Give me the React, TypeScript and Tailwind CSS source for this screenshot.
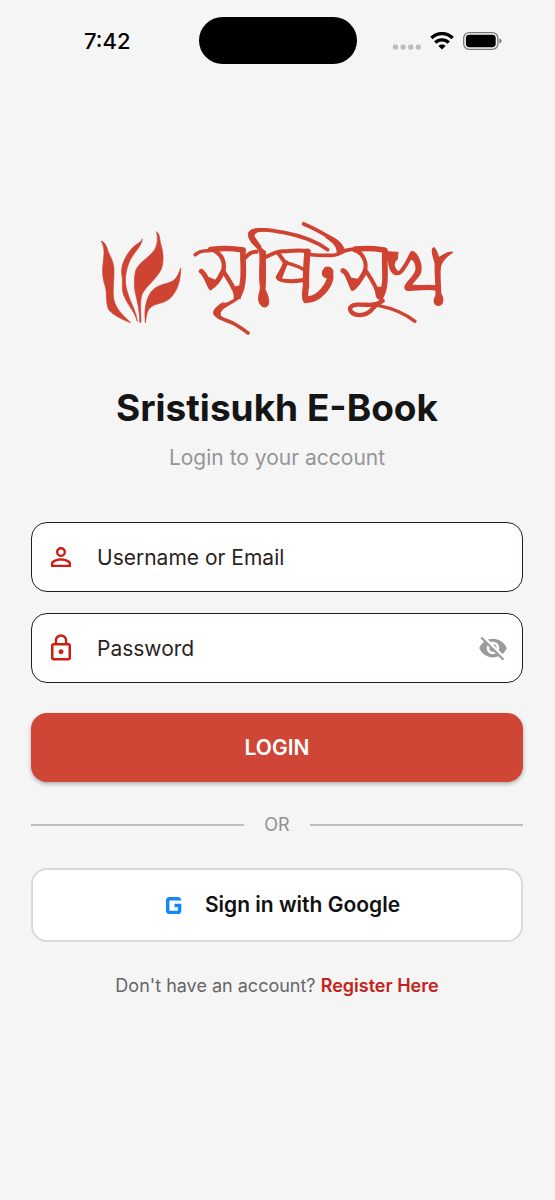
import { useState } from "react";
import { MdGMobiledata, MdLockOutline, MdPersonOutline, MdVisibility, MdVisibilityOff } from "react-icons/md";

function StatusBar() {
  return (
    <header className="flex items-center pt-[17px] pl-0.5">
      <div className="flex flex-1 justify-center pl-[14px] text-[22px] leading-7 font-medium text-black">7:42</div>
      <div className="h-[47px] w-[158px] rounded-full bg-black" />
      <div className="flex flex-1 items-center justify-center gap-[9px] pr-4">
        <svg viewBox="0 0 28 18" className="h-[18px] w-7" fill="#bdbdbd" aria-hidden="true">
          <rect x="0" y="12.5" width="5" height="5" rx="1.6" />
          <rect x="7.6" y="12.5" width="5" height="5" rx="1.6" />
          <rect x="15.2" y="12.5" width="5" height="5" rx="1.6" />
          <rect x="22.8" y="12.5" width="5" height="5" rx="1.6" />
        </svg>
        <svg viewBox="0 0 24 18" className="h-[18px] w-6" fill="none" stroke="#000" strokeWidth="3.4" aria-hidden="true">
          <path d="M1.4 6a15 15 0 0 1 21.2 0" />
          <path d="M5.3 10.6a9.5 9.5 0 0 1 13.4 0" />
          <path d="M12 17.6 8.4 14a5.1 5.1 0 0 1 7.2 0Z" fill="#000" stroke="none" />
        </svg>
        <svg viewBox="0 0 39 18" className="h-[18px] w-[39px]" aria-hidden="true">
          <rect x="0.7" y="0.7" width="34.2" height="16.6" rx="5.4" fill="none" stroke="#777" strokeWidth="1.3" />
          <rect x="2.9" y="2.8" width="29.8" height="12.4" rx="3.4" fill="#000" />
          <path d="M36.4 6.2q2.2 1 2.2 2.8t-2.2 2.8Z" fill="#777" />
        </svg>
      </div>
    </header>
  );
}

function Logo() {
  return (
    <svg
      viewBox="6 0 1110 375"
      className="h-[125px] w-[370px]"
      fill="none"
      stroke="#cf4332"
      strokeLinecap="round"
      strokeLinejoin="round"
      role="img"
      aria-label="Sristisukh"
    >
      <g fill="#cf4332" strokeWidth="2">
        <path d="M34 79C48 82 50 98 56 113C64 131 71 142 72 163C73 194 67 224 71 251C77 282 99 301 122 323C95 313 73 302 57 286C46 262 52 238 46 215C40 197 37 182 38 158C40 130 48 102 34 79Z" />
        <path d="M157 73C153 100 126 115 115 148C104 180 104 205 112 230C121 264 137 283 142 319C132 285 111 269 100 237C93 213 101 201 95 178C92 143 113 113 132 94C144 84 152 83 157 73Z" />
        <path d="M200 51C211 59 208 73 213 90C220 113 222 138 214 162C201 191 168 213 156 238C149 261 153 289 153 322H149C150 291 143 264 138 242C131 217 132 184 138 164C149 141 178 127 194 104C204 86 203 67 200 51Z" />
        <path d="M272 160C273 184 266 219 249 240C227 270 201 260 181 278C169 289 169 307 166 324C164 301 164 275 171 256C179 231 193 217 212 211C234 203 248 202 257 190C264 181 268 171 272 160Z" />
      </g>
      <g>
        <path d="M316 119C332 103 350 110 370 105" strokeWidth="11" />
        <path d="M362 103C390 100 425 99 459 105" strokeWidth="16" />
        <path d="M372 106C396 118 407 144 399 170" strokeWidth="13" />
        <path d="M334 169C346 176 351 197 362 217C377 209 389 190 399 169" strokeWidth="15" />
        <path d="M345 186L362 222L381 200Z" fill="#cf4332" strokeWidth="8" />
        <path d="M399 168C410 185 428 208 439 240" strokeWidth="13" />
        <path d="M459 107C457 137 464 172 457 207C455 226 448 239 440 247" strokeWidth="17" />
        <path d="M432 218L458 212L450 250L434 246Z" fill="#cf4332" strokeWidth="5" />
        <path d="M444 246C428 267 389 272 377 291C375 309 405 313 430 325C448 334 460 344 474 354" strokeWidth="11" />
        <path d="M397 264C373 278 364 293 376 303L402 313C382 298 388 288 418 268Z" fill="#cf4332" strokeWidth="3" />
        <path d="M464 130C474 117 486 109 500 110" strokeWidth="12" />
      </g>
      <g>
        <path d="M520 110C500 94 473 70 481 53C498 38 544 46 584 53C635 63 680 80 713 104" strokeWidth="11" />
        <path d="M476 62C472 42 500 37 530 42L560 50C520 46 493 46 492 64L514 96L500 98C489 88 479 76 476 62Z" fill="#cf4332" strokeWidth="3" />
        <path d="M502 98L527 110C524 144 529 179 525 223C534 242 541 261 532 273C522 282 508 271 506 255C504 240 512 230 511 215C506 177 512 139 509 112Z" fill="#cf4332" strokeWidth="3" />
        <path d="M524 128C546 117 559 108 588 109C615 106 638 106 656 109" strokeWidth="12" />
        <path d="M566 117C576 128 578 137 588 145C579 158 570 175 563 187C570 200 610 201 640 195" strokeWidth="12" />
        <path d="M588 143C608 149 626 153 640 163" strokeWidth="10" />
        <path d="M587 143L573 177L568 190" strokeWidth="15" />
        <path d="M652 110C650 145 647 175 648 211C646 230 642 247 648 255" strokeWidth="19" />
        <path d="M648 252C664 257 684 245 699 229C719 207 726 183 716 169" strokeWidth="20" />
        <path d="M705 158C713 153 728 157 729 170C730 185 715 184 706 188C694 184 694 166 705 158Z" fill="#cf4332" strokeWidth="3" />
        <path d="M656 118C675 123 705 121 728 121C743 120 752 115 764 107" strokeWidth="11" />
        <path d="M641 27C675 40 713 64 735 76C748 84 754 94 752 106" strokeWidth="11" />
        <path d="M716 62C740 71 758 86 763 105L741 119C744 98 734 86 708 68Z" fill="#cf4332" strokeWidth="3" />
      </g>
      <g transform="translate(690 0)">
        <path d="M60 108C78 109 86 102 108 102" strokeWidth="11" />
        <path d="M106 102C138 99 166 101 192 105" strokeWidth="16" />
        <path d="M102 105C130 112 143 145 134 168" strokeWidth="12" />
        <path d="M69 167C84 173 88 198 98 220C112 211 120 196 134 172" strokeWidth="15" />
        <path d="M82 190L99 221L118 196Z" fill="#cf4332" strokeWidth="8" />
        <path d="M135 164C148 184 168 209 177 246" strokeWidth="12" />
        <path d="M195 107C192 142 198 182 193 212C191 226 189 239 180 246" strokeWidth="17" />
        <path d="M165 217L195 217L187 253L170 246Z" fill="#cf4332" strokeWidth="4" />
        <path d="M188 257C174 267 166 271 155 284C140 303 107 305 94 291C84 278 95 270 112 269C137 267 162 275 180 262" strokeWidth="13" />
        <path d="M176 272C212 279 251 293 285 319" strokeWidth="10" />
        <path d="M198 110L235 112C230 121 238 130 226 139C219 151 225 163 236 170L232 180C213 179 209 160 205 143Z" fill="#cf4332" strokeWidth="3" />
        <path d="M216 162C223 177 238 178 246 166C258 151 265 137 274 118" strokeWidth="12" />
        <path d="M262 136L274 110C285 108 292 121 298 136C306 155 304 176 290 190L274 209C290 216 318 208 350 213L349 225C323 219 303 226 276 225C262 229 250 223 257 210C264 197 283 183 288 166C290 148 281 133 275 132Z" fill="#cf4332" strokeWidth="4" />
        <path d="M342 98C351 107 351 119 357 128C371 122 384 108 397 112C383 121 366 137 361 154C358 180 361 206 362 236C373 254 368 270 356 271C342 270 339 258 348 242C350 213 344 174 346 147C343 130 334 116 338 101Z" fill="#cf4332" strokeWidth="4" />
      </g>
    </svg>
  );
}

const fieldBox =
  "flex h-[70px] items-center rounded-2xl border border-[#2b1c1c] bg-white pr-[14px] pl-[14px] focus-within:ring-1 focus-within:ring-[#2b1c1c]";
const fieldInput =
  "h-full min-w-0 flex-1 bg-transparent pl-[21px] text-[21px] text-[#2b1f1f] outline-none placeholder:text-[#2b1f1f]";

export default function App() {
  const [visible, setVisible] = useState(false);

  return (
    <div className="min-h-screen bg-[#f5f5f5] font-['Inter',sans-serif]">
      <StatusBar />
      <main className="flex flex-col pt-[151px] pr-8 pb-12 pl-[31px]">
        <div className="flex justify-center">
          <Logo />
        </div>
        <h1 className="mt-[46px] text-center text-[37px] leading-[44px] font-bold text-[#151515]">Sristisukh E-Book</h1>
        <p className="mt-[14px] text-center text-[21px] leading-7 text-[#969696]">Login to your account</p>

        <form className="mt-[50px] flex flex-col" onSubmit={(e) => e.preventDefault()}>
          <div className={fieldBox}>
            <label htmlFor="username" aria-label="Username or Email">
              <MdPersonOutline className="size-[30px] text-[#cc1f12]" />
            </label>
            <input id="username" type="text" placeholder="Username or Email" className={fieldInput} />
          </div>
          <div className={`mt-[21px] ${fieldBox}`}>
            <label htmlFor="password" aria-label="Password">
              <MdLockOutline className="size-[30px] text-[#cc1f12]" />
            </label>
            <input
              id="password"
              type={visible ? "text" : "password"}
              placeholder="Password"
              className={fieldInput}
            />
            <button
              type="button"
              aria-label={visible ? "Hide password" : "Show password"}
              onClick={() => setVisible(!visible)}
              className="text-[#9b9b9b]"
            >
              {visible ? <MdVisibility className="size-[30px]" /> : <MdVisibilityOff className="size-[30px]" />}
            </button>
          </div>
          <button
            type="submit"
            className="mt-[30px] h-[69px] rounded-2xl bg-[#cf4636] text-[21px] font-semibold text-white shadow-[0_2px_4px_rgba(0,0,0,0.3)]"
          >
            LOGIN
          </button>
        </form>

        <div className="mt-[29px] flex items-center gap-5">
          <div className="h-0.5 flex-1 bg-[#bebebe]" />
          <span className="text-lg text-[#929292]">OR</span>
          <div className="h-0.5 flex-1 bg-[#bebebe]" />
        </div>

        <button
          type="button"
          className="mt-[29px] flex h-[74px] items-center justify-center gap-[10px] rounded-2xl border-2 border-[#dadada] bg-white text-[21px] font-semibold text-[#111]"
        >
          <MdGMobiledata className="size-[41px] text-[#1389f5]" />
          Sign in with Google
        </button>

        <p className="mt-[30px] text-center text-lg text-[#666]">
          Don't have an account?{" "}
          <a href="#register" className="font-semibold text-[#c5221a]">
            Register Here
          </a>
        </p>
      </main>
    </div>
  );
}
